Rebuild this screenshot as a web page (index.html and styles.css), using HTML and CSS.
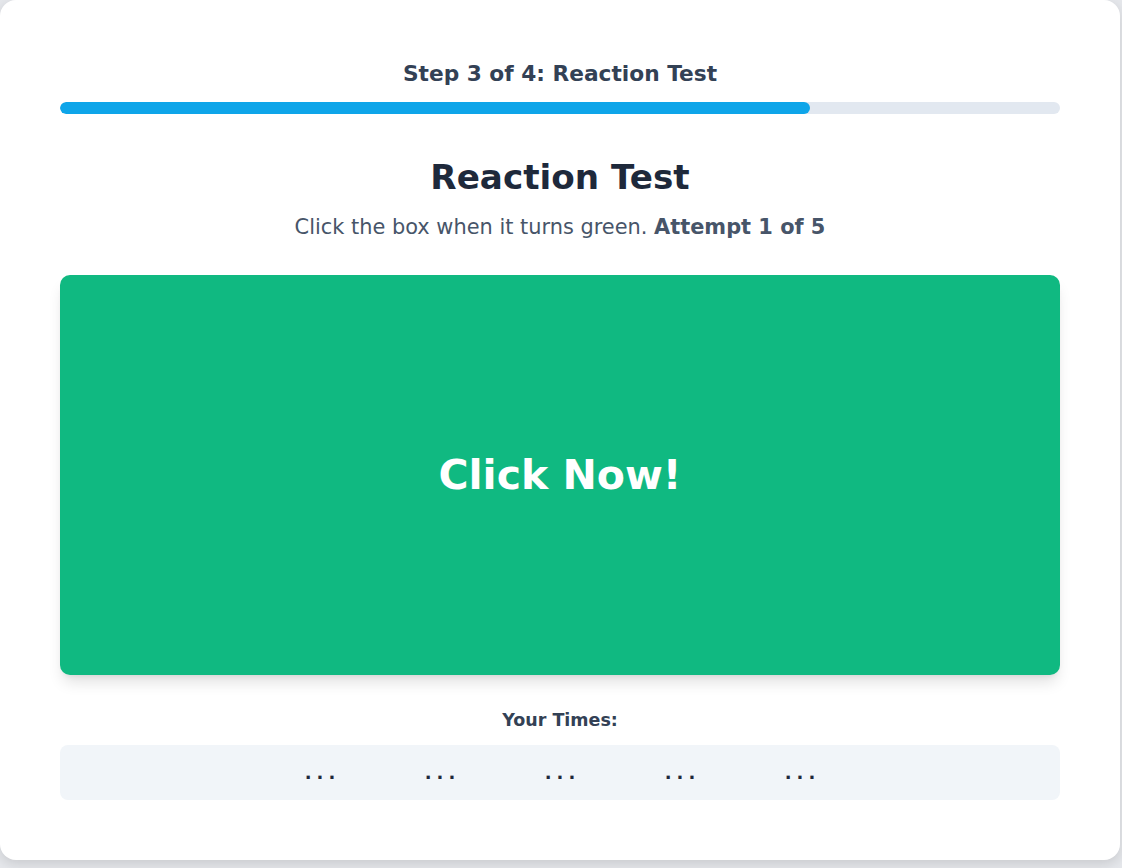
FILE: index.html
```html
<!DOCTYPE html>
<html lang="en">
<head>
<meta charset="utf-8">
<title>Reaction Test</title>
<link rel="stylesheet" href="styles.css">
</head>
<body>
<main class="card">
  <div class="step-label">Step 3 of 4: Reaction Test</div>
  <div class="progress"><div class="progress-fill" style="width:75%"></div></div>
  <h1 class="title">Reaction Test</h1>
  <p class="subtitle">Click the box when it turns green. <strong>Attempt 1 of 5</strong></p>
  <div class="react-box">Click Now!</div>
  <div class="times-label">Your Times:</div>
  <div class="times">
    <span class="time">...</span>
    <span class="time">...</span>
    <span class="time">...</span>
    <span class="time">...</span>
    <span class="time">...</span>
  </div>
</main>
</body>
</html>
```

FILE: styles.css
```css
* { box-sizing: border-box; }
html, body { margin: 0; padding: 0; }
body {
  background: #e5e7eb;
  font-family: "DejaVu Sans", Inter, sans-serif;
  width: 1122px;
  height: 868px;
  overflow: hidden;
}
.card {
  width: 1120px;
  height: 860px;
  background: #ffffff;
  border-radius: 16px;
  box-shadow: 0 4px 12px rgba(0,0,0,0.12);
  padding: 60px 60px;
  display: flex;
  flex-direction: column;
  align-items: stretch;
}
.step-label {
  text-align: center;
  font-size: 21.7px;
  font-weight: 700;
  line-height: 28px;
  color: #334155;
}
.progress {
  margin-top: 14px;
  height: 12px;
  border-radius: 6px;
  background: #e2e8f0;
  overflow: hidden;
}
.progress-fill {
  height: 100%;
  background: #0ea5e9;
  border-radius: 6px;
}
.title {
  margin: 41px 0 0;
  text-align: center;
  font-size: 34.2px;
  font-weight: 700;
  line-height: 44px;
  color: #1e293b;
}
.subtitle {
  margin: 14px 0 0;
  text-align: center;
  font-size: 20.9px;
  line-height: 28px;
  color: #475569;
  font-weight: 400;
}
.subtitle strong { font-weight: 700; }
.react-box {
  margin-top: 34px;
  height: 400px;
  border-radius: 10px;
  background: #10b981;
  color: #ffffff;
  display: flex;
  align-items: center;
  justify-content: center;
  font-size: 41px;
  font-weight: 700;
  box-shadow: 0 10px 15px -3px rgba(0,0,0,0.12), 0 4px 6px -4px rgba(0,0,0,0.1);
}
.times-label {
  margin-top: 33px;
  text-align: center;
  font-size: 17.5px;
  font-weight: 700;
  line-height: 24px;
  color: #334155;
}
.times {
  margin-top: 13px;
  height: 55px;
  border-radius: 8px;
  background: #f1f5f9;
  display: flex;
  justify-content: center;
  align-items: center;
  gap: 60px;
  padding-top: 0;
}
.time {
  width: 60px;
  text-align: center;
  font-size: 18px;
  font-weight: 700;
  color: #1e293b;
  letter-spacing: 5px;
  text-indent: 5px;
}
```
